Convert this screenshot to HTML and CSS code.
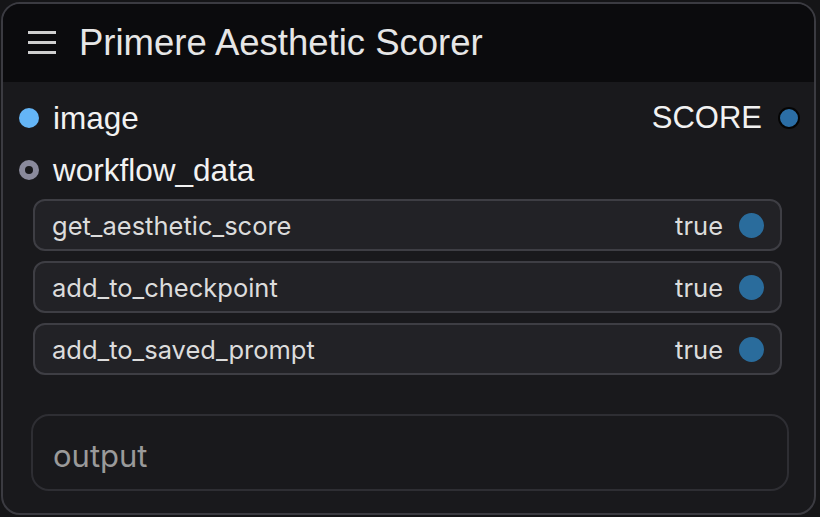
FILE: index.html
```html
<!DOCTYPE html>
<html>
<head>
<meta charset="utf-8">
<link rel="stylesheet" href="styles.css">
</head>
<body>
<div class="node">
  <div class="header">
    <svg class="menu" width="30" height="26" viewBox="0 0 30 26">
      <rect x="0" y="2" width="28" height="3" fill="#cfcfcf"/>
      <rect x="0" y="12" width="28" height="3" fill="#cfcfcf"/>
      <rect x="0" y="22" width="28" height="3" fill="#cfcfcf"/>
    </svg>
    <span class="title">Primere Aesthetic Scorer</span>
  </div>
  <div class="body">
    <div class="slots">
      <div class="slot-row">
        <div class="slot in"><span class="dot blue"></span><span class="slot-label">image</span></div>
        <div class="slot out"><span class="slot-label">SCORE</span><span class="dot outdot"></span></div>
      </div>
      <div class="slot-row">
        <div class="slot in"><span class="dot gray"><span class="inner"></span></span><span class="slot-label">workflow_data</span></div>
      </div>
    </div>
    <div class="widgets">
      <div class="widget"><span class="wname">get_aesthetic_score</span><span class="wval">true<span class="toggle"></span></span></div>
      <div class="widget"><span class="wname">add_to_checkpoint</span><span class="wval">true<span class="toggle"></span></span></div>
      <div class="widget"><span class="wname">add_to_saved_prompt</span><span class="wval">true<span class="toggle"></span></span></div>
    </div>
    <div class="output"><span class="placeholder">output</span></div>
  </div>
</div>
</body>
</html>
```
FILE: styles.css
```css
html, body { margin: 0; padding: 0; }
body {
  width: 820px; height: 517px;
  background: #151517;
  font-family: "Liberation Sans", Arial, sans-serif;
  overflow: hidden;
}
.node {
  margin: 2px 0 0 1px;
  width: 815px;
  height: 513px;
  box-sizing: border-box;
  border: 2px solid #3b3b41;
  border-radius: 19px;
  background: #19191c;
  overflow: hidden;
  display: flex;
  flex-direction: column;
}
.header {
  height: 78px;
  background: #0b0b0d;
  display: flex;
  align-items: center;
  padding-left: 25px;
  flex-shrink: 0;
}
.menu { margin-right: 21px; margin-top: -2px; }
.title {
  color: #e6e6e6;
  font-size: 36.5px;
  margin-top: -1px;
}
.body { display: flex; flex-direction: column; }
.slots { padding-top: 10px; }
.slot-row {
  height: 52px;
  display: flex;
  justify-content: space-between;
  align-items: center;
}
.slot { display: flex; align-items: center; }
.slot.in { padding-left: 16px; }
.slot.out { padding-right: 14px; }
.slot-label { color: #f2f2f2; font-size: 31.5px; }
.in .slot-label { margin-left: 14px; }
.out .slot-label { margin-right: 16px; font-size: 31px; }
.dot {
  width: 20px; height: 20px; border-radius: 50%;
  display: flex; align-items: center; justify-content: center;
  box-sizing: border-box;
}
.dot.blue { background: #64b5f6; }
.dot.gray { background: #8a8a9c; }
.dot.gray .inner { width: 8px; height: 8px; border-radius: 50%; background: #19191c; }
.dot.outdot { background: #2b6ea6; border: 2px solid #050505; width: 22px; height: 22px; }
.widgets {
  display: flex; flex-direction: column; gap: 10px;
  padding: 3px 32px 0 30px;
}
.widget {
  height: 52px;
  box-sizing: border-box;
  border: 2px solid #3e3e44;
  border-radius: 12px;
  background: #222226;
  display: flex; align-items: center; justify-content: space-between;
  padding: 0 16px 0 17px;
  font-family: Inter, "Liberation Sans", sans-serif;
  font-size: 25.5px;
  color: #dcdcdc;
}
.wval { display: flex; align-items: center; color: #dcdcdc; }
.toggle {
  width: 25px; height: 25px; border-radius: 50%;
  background: #2a6c9c; margin-left: 16px;
}
.output {
  margin: 39px 25px 0 28px;
  height: 77px;
  box-sizing: border-box;
  border: 2px solid #2e2e33;
  border-radius: 18px;
  display: flex; align-items: center;
  padding-left: 20px;
}
.placeholder {
  color: #9a9a9a;
  font-family: Inter, "Liberation Sans", sans-serif;
  font-size: 31px;
  margin-top: 5px;
}
```
